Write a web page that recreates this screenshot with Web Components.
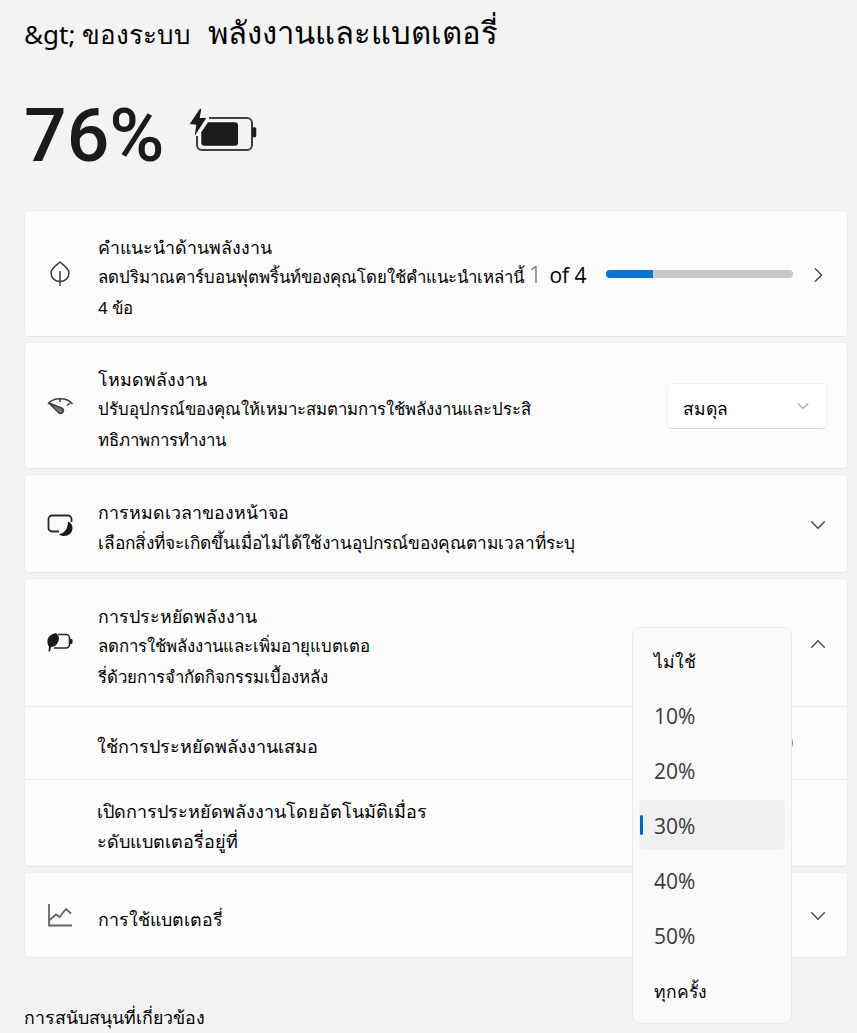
<!DOCTYPE html>
<html lang="th">
<head>
<meta charset="utf-8">
<title>พลังงานและแบตเตอรี่</title>
<style>
  html, body { margin: 0; height: 100%; overflow: hidden; background: #f3f3f3; }
  body { font-family: "Noto Sans", "Liberation Sans", sans-serif; color: #000; }
  setting-card .sub { font-size: 16.8px; }
  setting-card .sub.wide { font-size: 17.3px; }
  setting-card i.n { font-style: normal; font-family: "Open Sans", sans-serif; font-weight: 300; font-size: 24px; line-height: 1; color: #666; }
  setting-card b { font-weight: 400; font-family: "Open Sans", sans-serif; font-size: 21px; line-height: 1; margin-left: 3px; }
</style>
</head>
<body>
<power-page>
  <page-title slot="top" crumb="&amp;gt; ของระบบ" current="พลังงานและแบตเตอรี่"></page-title>
  <battery-level slot="top" value="76%"></battery-level>

  <setting-card h="127" chev="right">
    <svg slot="icon" width="24" height="26" viewBox="0 0 24 26" fill="none" stroke="#3c3c3c" stroke-width="1.500"><path d="M12 1C9 4 3 7 3 12c0 5 4 8.500 9 8.500s9-3.500 9-8.500c0-5-6-8-9-11Z"/><path d="M12 10v15"/></svg>
    <span>คำแนะนำด้านพลังงาน</span>
    <span class="sub">ลดปริมาณคาร์บอนฟุตพริ้นท์ของคุณโดยใช้คำแนะนำเหล่านี้ <i class="n">1</i> <b>of 4</b></span>
    <span class="sub">4 ข้อ</span>
    <tip-progress slot="action" pct="25"></tip-progress>
  </setting-card>

  <setting-card h="127">
    <svg slot="icon" width="26" height="20" viewBox="0 0 26 20" fill="none" stroke="#3c3c3c" stroke-width="1.500"><path d="M1 8C6 1 20 1 25.500 8"/><path d="M13 2.500V6M23 7l-3 2.500"/><path d="M2 7l9.500 9.500a2.800 2.800 0 0 0 4-4Z" fill="#777"/></svg>
    <span>โหมดพลังงาน</span>
    <span class="sub">ปรับอุปกรณ์ของคุณให้เหมาะสมตามการใช้พลังงานและประสิ</span>
    <span class="sub">ทธิภาพการทำงาน</span>
    <combo-box slot="action" label="สมดุล"></combo-box>
  </setting-card>

  <setting-card h="99" chev="down">
    <svg slot="icon" style="margin-top:3px" width="26" height="22" viewBox="0 0 26 22" fill="none" stroke="#2a2a2a" stroke-width="1.800"><path d="M12 17.500H5A3.500 3.500 0 0 1 1.500 14V5A3.500 3.500 0 0 1 5 1.500h16A3.500 3.500 0 0 1 24.500 5v3"/><path d="M21 7.500A7.500 7.500 0 0 1 25.500 14c0 5-4 8-8.500 8-2 0-4-.5-5-2 5 0 9-5 9-12.500Z" fill="#1a1a1a" stroke="none"/></svg>
    <span>การหมดเวลาของหน้าจอ</span>
    <span class="sub wide">เลือกสิ่งที่จะเกิดขึ้นเมื่อไม่ได้ใช้งานอุปกรณ์ของคุณตามเวลาที่ระบุ</span>
  </setting-card>

  <setting-card h="129" chev="up" open>
    <svg slot="icon" width="26" height="20" viewBox="0 0 26 20" fill="none" stroke="#2a2a2a" stroke-width="1.600"><path d="M11 1.500h8A3.500 3.500 0 0 1 22.500 5v6.500A3.500 3.500 0 0 1 19 15H7"/><rect x="22.500" y="6" width="3" height="5" rx="1.200" fill="#1a1a1a" stroke="none"/><path d="M9 0C4 1 0 4 .5 9c0 2 .5 3.500 1.500 4.500l-.5 5H3l1-4.500c4 0 7-3 8-8 0-2.500-1-4.500-3-6Z" fill="#1a1a1a" stroke="none"/></svg>
    <span>การประหยัดพลังงาน</span>
    <span class="sub">ลดการใช้พลังงานและเพิ่มอายุแบตเตอ</span>
    <span class="sub">รี่ด้วยการจำกัดกิจกรรมเบื้องหลัง</span>
    <setting-row slot="rows" h="73">
      <span>ใช้การประหยัดพลังงานเสมอ</span>
      <toggle-mark slot="action"></toggle-mark>
    </setting-row>
    <setting-row slot="rows" h="87">
      <span>เปิดการประหยัดพลังงานโดยอัตโนมัติเมื่อร</span>
      <span>ะดับแบตเตอรี่อยู่ที่</span>
    </setting-row>
  </setting-card>

  <setting-card h="86" chev="down">
    <svg slot="icon" width="24" height="23" viewBox="0 0 24 23" fill="none" stroke="#666" stroke-width="1.800"><path d="M1 0v21.500h23"/><path d="M1 16.500l7-6 3.500 2.500L18 5l5 4.500"/></svg>
    <span>การใช้แบตเตอรี่</span>
  </setting-card>

  <section-label slot="bottom">การสนับสนุนที่เกี่ยวข้อง</section-label>

  <percent-flyout slot="over" selected="30%">
    <span>ไม่ใช้</span><span>10%</span><span>20%</span><span>30%</span><span>40%</span><span>50%</span><span>ทุกครั้ง</span>
  </percent-flyout>
</power-page>

<script>
const THAI = '"Noto Sans", "Liberation Sans", sans-serif';
const LATIN = '"Open Sans", "Noto Sans", sans-serif';

const chevrons = {
  right: "M7 3l7 7-7 7",
  down: "M3 6.500l7 7 7-7",
  up: "M3 13.500l7-7 7 7",
};
const chevron = (dir, size, color) =>
  `<svg width="${size}" height="${size}" viewBox="0 0 20 20" fill="none" stroke="${color}" stroke-width="1.600" stroke-linecap="round" stroke-linejoin="round"><path d="${chevrons[dir]}"/></svg>`;

/** Page */

class PowerPage extends HTMLElement {
  constructor() {
    super();
    this.attachShadow({ mode: "open" }).innerHTML = `
<style>
  :host { display: block; position: relative; height: 1033px; overflow: hidden; box-sizing: border-box; padding: 0 9px 0 24px; }
  .cards { display: flex; flex-direction: column; gap: 5px; margin-top: 36px; }
  .bottom { margin-top: 44px; }
</style>
<slot name="top"></slot>
<div class="cards"><slot></slot></div>
<div class="bottom"><slot name="bottom"></slot></div>
<slot name="over"></slot>`;
  }
}

class PageTitle extends HTMLElement {
  constructor() {
    super();
    this.attachShadow({ mode: "open" });
  }
  connectedCallback() {
    this.shadowRoot.innerHTML = `
<style>
  :host { display: flex; align-items: baseline; gap: 17px; height: 68px; padding-top: 8px; box-sizing: border-box; font-family: ${THAI}; white-space: nowrap; }
  .crumb { font-size: 26px; }
  .cur { font-size: 31px; }
</style>
<span class="crumb">${this.getAttribute("crumb").replace(/&/g, "&amp;")}</span>
<span class="cur">${this.getAttribute("current")}</span>`;
  }
}

class BatteryLevel extends HTMLElement {
  constructor() {
    super();
    this.attachShadow({ mode: "open" });
  }
  connectedCallback() {
    this.shadowRoot.innerHTML = `
<style>
  :host { display: flex; align-items: center; gap: 25px; height: 106px; padding-top: 28px; box-sizing: border-box; color: #1b1b1b; }
  .v { font: 500 75px/1 Roboto, ${LATIN}; }
  svg { margin-bottom: 10px; }
</style>
<span class="v">${this.getAttribute("value")}</span>
<svg width="68" height="46" viewBox="0 0 68 46" fill="none">
  <path d="M10.700 2 .7 17l6.600.7-1.600 11L17.300 11h-6.600l1.600-9Z" fill="#1b1b1b"/>
  <path d="M8 29v9a5 5 0 0 0 5 5h45a5 5 0 0 0 5-5V16a5 5 0 0 0-5-5H20" stroke="#3f3f3f" stroke-width="2"/>
  <path d="M19 15.300h27a3 3 0 0 1 3 3v17.400a3 3 0 0 1-3 3H15.300a3 3 0 0 1-3-3V25.300Z" fill="#1b1b1b"/>
  <rect x="63" y="20.300" width="4.300" height="10" rx="1.500" fill="#1b1b1b"/>
</svg>`;
  }
}

/** Cards */

class SettingCard extends HTMLElement {
  constructor() {
    super();
    this.attachShadow({ mode: "open" });
  }
  connectedCallback() {
    const dir = this.getAttribute("chev");
    this.shadowRoot.innerHTML = `
<style>
  :host { display: block; background: #fbfbfb; border: 1px solid #ededed; border-bottom-color: #e6e6e6; border-radius: 5px; font-family: ${THAI}; font-size: 17.8px; line-height: 30.5px; }
  .head { display: flex; align-items: center; box-sizing: border-box; min-height: ${this.getAttribute("h") - 2}px; padding: 0 20px 0 22px; }
  .icon { flex: none; width: 26px; height: 26px; display: flex; align-items: center; justify-content: center; margin-right: 25px; }
  .text { flex: 1; min-width: 0; display: flex; flex-direction: column; padding-top: 8px; }
  ::slotted(span) { display: block; white-space: nowrap; }
  .chev { flex: none; margin: 2px 0 0 15px; display: flex; }
  .rows ::slotted(setting-row) { border-top: 1px solid #e9e9e9; }
</style>
<div class="head">
  <div class="icon"><slot name="icon"></slot></div>
  <div class="text"><slot></slot></div>
  <slot name="action"></slot>
  ${dir ? `<div class="chev">${chevron(dir, 18, "#4a4a4a")}</div>` : ""}
</div>
<div class="rows"><slot name="rows"></slot></div>`;
  }
}

class SettingRow extends HTMLElement {
  constructor() {
    super();
    this.attachShadow({ mode: "open" });
  }
  connectedCallback() {
    this.shadowRoot.innerHTML = `
<style>
  :host { display: flex; align-items: center; box-sizing: border-box; min-height: ${this.getAttribute("h")}px; padding: 0 54px 0 72px; font-size: 18px; }
  .text { flex: 1; min-width: 0; padding-top: 6px; }
  ::slotted(span) { display: block; white-space: nowrap; }
</style>
<div class="text"><slot></slot></div>
<slot name="action"></slot>`;
  }
}

class TipProgress extends HTMLElement {
  constructor() {
    super();
    this.attachShadow({ mode: "open" });
  }
  connectedCallback() {
    this.shadowRoot.innerHTML = `
<style>
  :host { display: block; flex: none; width: 187px; height: 8px; border-radius: 4px; background: #c8c8c8; overflow: hidden; margin: 1px 1px 0 0; }
  div { height: 100%; background: #0a74d2; }
</style>
<div style="width:${this.getAttribute("pct")}%"></div>`;
  }
}

class ComboBox extends HTMLElement {
  constructor() {
    super();
    this.attachShadow({ mode: "open" });
  }
  connectedCallback() {
    this.shadowRoot.innerHTML = `
<style>
  :host { display: flex; flex: none; align-items: center; justify-content: space-between; box-sizing: border-box; width: 160px; height: 46px; margin-top: 1px; padding: 0 16px 0 15px; background: #fff; border: 1px solid #eeeeee; border-bottom-color: #d8d8d8; border-radius: 5px; font-size: 17.500px; }
  span { padding-top: 5px; }
</style>
<span>${this.getAttribute("label")}</span>${chevron("down", 14, "#9a9a9a")}`;
  }
}

class ToggleMark extends HTMLElement {
  constructor() {
    super();
    this.attachShadow({ mode: "open" }).innerHTML = `
<style>
  :host { display: block; flex: none; width: 40px; height: 18px; box-sizing: border-box; border: 1px solid #777; border-radius: 9px; }
</style>`;
  }
}

class SectionLabel extends HTMLElement {
  constructor() {
    super();
    this.attachShadow({ mode: "open" }).innerHTML = `
<style>
  :host { display: block; font-family: ${THAI}; font-size: 17.800px; line-height: 30px; white-space: nowrap; }
</style>
<slot></slot>`;
  }
}

/** Flyout over the cards */

class PercentFlyout extends HTMLElement {
  constructor() {
    super();
    this.attachShadow({ mode: "open" }).innerHTML = `
<style>
  :host { position: absolute; left: 632px; top: 627px; box-sizing: border-box; width: 160px; height: 397px; padding: 5px 6px; display: flex; flex-direction: column; background: #f9f9f9; border: 1px solid #e9e9e9; border-radius: 8px; }
  ::slotted(span) { display: block; flex: none; height: 55px; line-height: 56px; padding-left: 15px; font-family: ${LATIN}; font-size: 21px; color: #3a3a3a; border-radius: 5px; }
  ::slotted(span.thai) { font-family: ${THAI}; font-size: 17.500px; color: #000; }
  ::slotted(span.sel) { background: #f0f0f0; height: 50px; line-height: 52px; margin: 2px 0 3px; }
  .bar { position: absolute; left: 7px; top: 187px; width: 3px; height: 20px; border-radius: 2px; background: #0067c0; z-index: 1; }
</style>
<div class="bar"></div>
<slot></slot>`;
  }
  connectedCallback() {
    const sel = this.getAttribute("selected");
    for (const item of this.children) {
      if (item.textContent === sel) item.classList.add("sel");
      if (!item.textContent.includes("%")) item.classList.add("thai");
    }
  }
}

customElements.define("power-page", PowerPage);
customElements.define("page-title", PageTitle);
customElements.define("battery-level", BatteryLevel);
customElements.define("setting-card", SettingCard);
customElements.define("setting-row", SettingRow);
customElements.define("tip-progress", TipProgress);
customElements.define("combo-box", ComboBox);
customElements.define("toggle-mark", ToggleMark);
customElements.define("section-label", SectionLabel);
customElements.define("percent-flyout", PercentFlyout);
</script>
</body>
</html>
